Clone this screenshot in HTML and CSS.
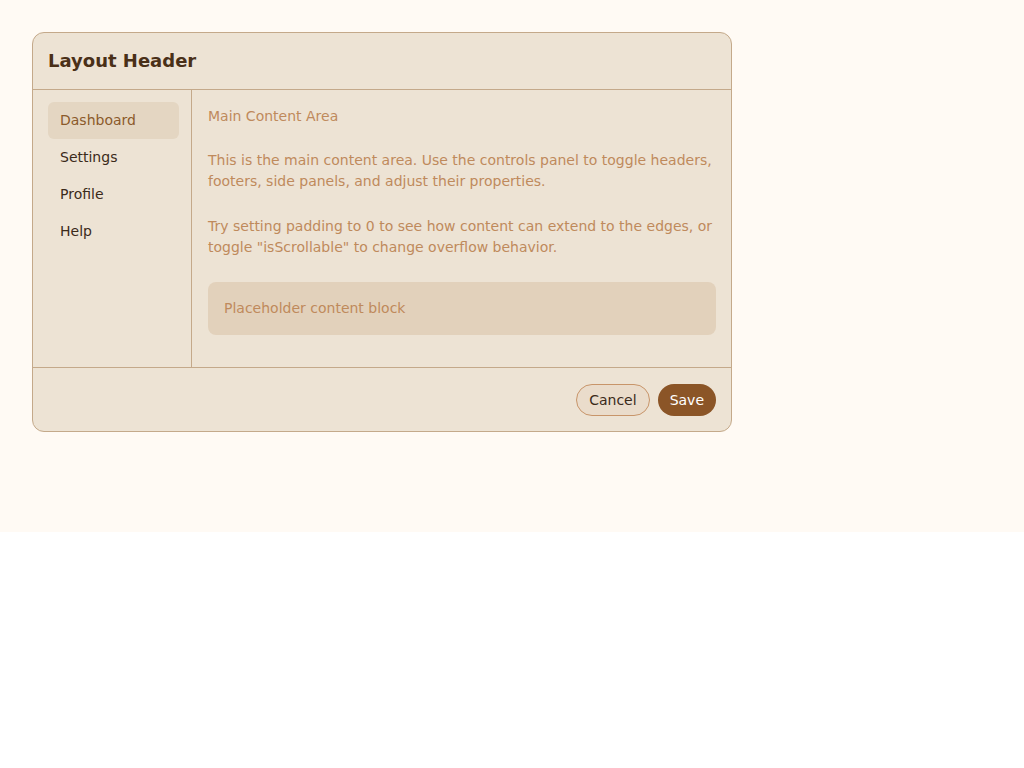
FILE: index.html
```html
<!DOCTYPE html>
<html lang="en">
<head>
  <meta charset="UTF-8" />
  <meta name="viewport" content="width=device-width, initial-scale=1.0"/>
  <title>Layout</title>
  <link rel="stylesheet" href="styles.css">
</head>
<body>
  <div class="page">
    <div class="card">
      <div class="card-header">
        <h1>Layout Header</h1>
      </div>

      <div class="card-body">
        <nav class="side">
          <a class="nav-item active" href="#">Dashboard</a>
          <a class="nav-item" href="#">Settings</a>
          <a class="nav-item" href="#">Profile</a>
          <a class="nav-item" href="#">Help</a>
        </nav>

        <main class="main">
          <p class="main-title">Main Content Area</p>
          <p>This is the main content area. Use the controls panel to toggle headers, footers, side panels, and adjust their properties.</p>
          <p>Try setting padding to 0 to see how content can extend to the edges, or toggle "isScrollable" to change overflow behavior.</p>
          <div class="placeholder">Placeholder content block</div>
        </main>
      </div>

      <div class="card-footer">
        <button class="btn btn-cancel">Cancel</button>
        <button class="btn btn-save">Save</button>
      </div>
    </div>
  </div>
</body>
</html>
```

FILE: styles.css
```css
body {
  margin: 0;
  font-family: "DejaVu Sans", Verdana, sans-serif;
  font-size: 14px;
  background: #ffffff;
}
.page {
  background: #fffaf4;
  padding: 32px;
  height: 532px;
  box-sizing: border-box;
}
.card {
  width: 700px;
  height: 400px;
  box-sizing: border-box;
  display: flex;
  flex-direction: column;
  background: #ede3d4;
  border: 1px solid #c4a98a;
  border-radius: 12px;
  overflow: hidden;
}
.card-header {
  padding: 16px 15px;
  border-bottom: 1px solid #c4a98a;
}
.card-header h1 {
  margin: 0;
  font-size: 18px;
  line-height: 24px;
  font-weight: bold;
  color: #4a3018;
}
.card-body {
  flex: 1;
  display: flex;
  min-height: 0;
}
.side {
  width: 159px;
  box-sizing: border-box;
  padding: 12px 12px 12px 15px;
  border-right: 1px solid #c4a98a;
  display: flex;
  flex-direction: column;
}
.nav-item {
  display: block;
  padding: 8px 12px;
  line-height: 21px;
  border-radius: 6px;
  color: #3b2a1a;
  text-decoration: none;
}
.nav-item.active {
  background: #e4d6c2;
  color: #8b5a2b;
}
.main {
  flex: 1;
  padding: 16px 15px 16px 16px;
  color: #bf8a5c;
  line-height: 21px;
}
.main p {
  margin: 0 0 24px;
}
.main .main-title {
  margin-bottom: 23px;
}
.placeholder {
  background: #e2d1bb;
  border-radius: 8px;
  padding: 16px;
}
.card-footer {
  display: flex;
  justify-content: flex-end;
  gap: 8px;
  padding: 16px 15px 15px;
  border-top: 1px solid #c4a98a;
}
.btn {
  font-family: inherit;
  font-size: 14px;
  line-height: 20px;
  padding: 5px 12px;
  border-radius: 16px;
  cursor: pointer;
}
.btn-cancel {
  background: #eadccb;
  color: #3b2a1a;
  border: 1px solid #c8956a;
}
.btn-save {
  background: #8b5527;
  color: #ffffff;
  border: none;
  padding: 6px 12px;
}
```
